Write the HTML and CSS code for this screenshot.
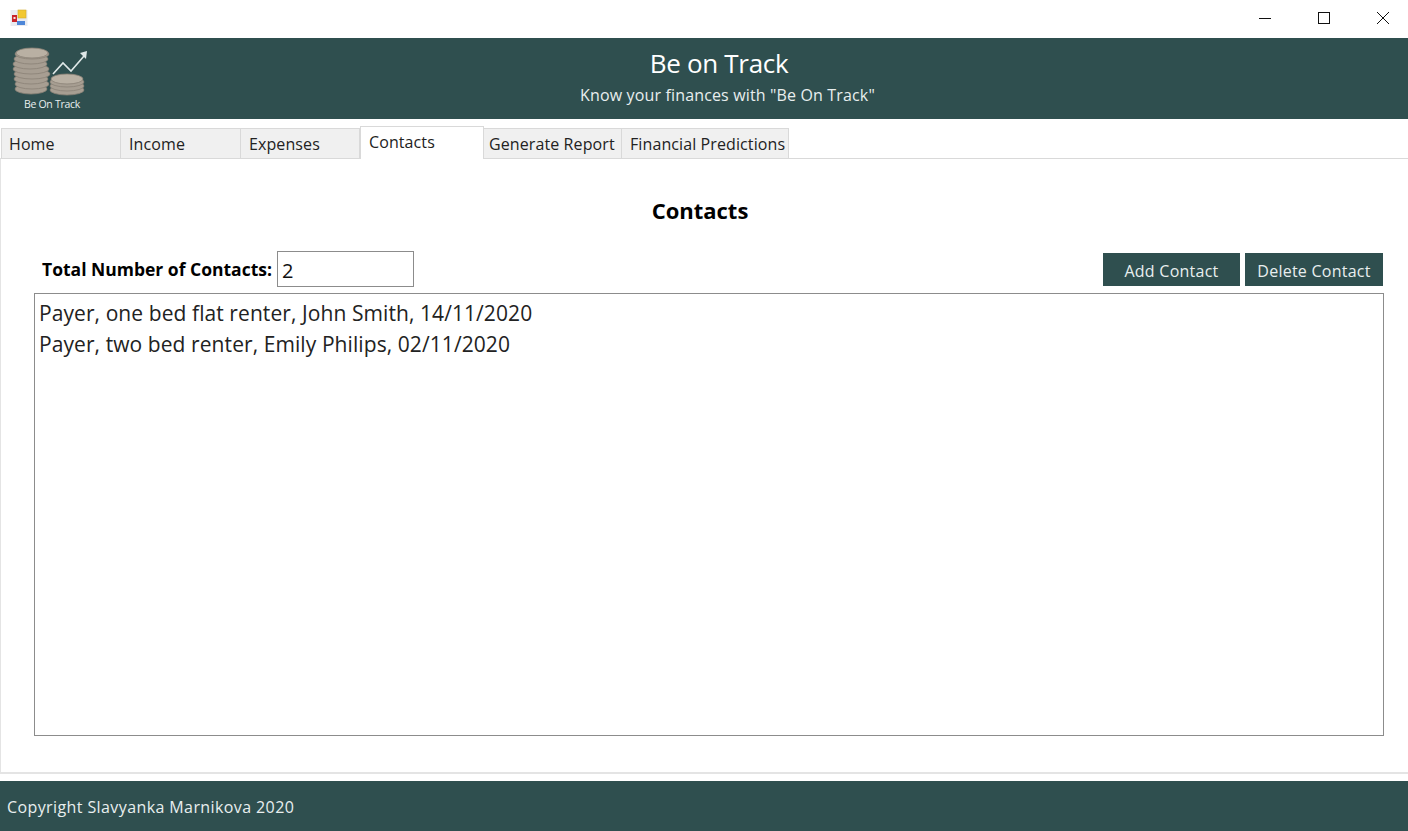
FILE: index.html
```html
<!DOCTYPE html>
<html lang="en">

<head>
    <meta charset="UTF-8">
    <meta name="viewport" content="width=device-width, initial-scale=1.0">
    <title>Be on Track</title>
    <link rel="stylesheet" href="styles.css">
</head>

<body>
    <div class="title_bar">
        <svg class="app_icon" width="18" height="18" viewBox="0 0 18 18">
            <rect x="0.5" y="1" width="17" height="16" fill="#e9ebf0"/>
            <rect x="2" y="6" width="5" height="7" fill="#c9242b"/>
            <rect x="3.5" y="8" width="2" height="2" fill="#f5e6e0"/>
            <rect x="8" y="1" width="8" height="8" fill="#f2c832" stroke="#d4ac2c" stroke-width="0.6"/>
            <rect x="7" y="12" width="8" height="4" fill="#4d86d8"/>
        </svg>
        <div class="win_btns">
            <svg width="14" height="14" viewBox="0 0 14 14"><path d="M1 7.5h12" stroke="#111" fill="none"/></svg>
            <svg width="14" height="14" viewBox="0 0 14 14"><rect x="1.5" y="1.5" width="11" height="11" stroke="#111" fill="none"/></svg>
            <svg width="14" height="14" viewBox="0 0 14 14"><path d="M1 1l12 12M13 1L1 13" stroke="#111" fill="none"/></svg>
        </div>
    </div>

    <div class="header">
        <div class="logo">
            <svg width="76" height="52" viewBox="0 0 76 52">
                <defs>
                    <filter id="soft"><feGaussianBlur stdDeviation="0.5"/></filter>
                </defs>
                <g filter="url(#soft)" fill="#a79e92" stroke="#8a8276" stroke-width="0.8">
                    <ellipse cx="19" cy="42" rx="16" ry="5"/>
                    <ellipse cx="20" cy="37" rx="17" ry="5"/>
                    <ellipse cx="19" cy="32" rx="17" ry="5"/>
                    <ellipse cx="20" cy="27" rx="18" ry="5"/>
                    <ellipse cx="19" cy="22" rx="18" ry="5"/>
                    <ellipse cx="18" cy="17" rx="17" ry="5"/>
                    <ellipse cx="19" cy="12" rx="17" ry="5"/>
                    <ellipse cx="20" cy="7" rx="17" ry="5"/>
                    <ellipse cx="20" cy="6" rx="16" ry="5" fill="#b9b0a3"/>
                    <ellipse cx="55" cy="43" rx="17" ry="5"/>
                    <ellipse cx="55" cy="39" rx="17" ry="5"/>
                    <ellipse cx="55" cy="35" rx="17" ry="5"/>
                    <ellipse cx="55" cy="32" rx="16" ry="5" fill="#b9b0a3"/>
                </g>
                <path d="M41 27l10-11 8 8 13-15" stroke="#dfe8e8" stroke-width="1.6" fill="none"/>
                <path d="M68 6l7-2-1 8z" fill="#dfe8e8"/>
            </svg>
            <div class="logo_text">Be On Track</div>
        </div>
        <div class="header_text">
            <div class="header_title">Be on Track</div>
            <div class="header_sub">Know your finances with "Be On Track"</div>
        </div>
    </div>

    <div class="tabs">
        <div class="tab tab_home">Home</div>
        <div class="tab tab_income">Income</div>
        <div class="tab tab_expenses">Expenses</div>
        <div class="tab tab_contacts active">Contacts</div>
        <div class="tab tab_report">Generate Report</div>
        <div class="tab tab_pred">Financial Predictions</div>
    </div>

    <div class="panel">
        <h1 class="panel_title">Contacts</h1>
        <div class="toolbar">
            <label class="total_label">Total Number of Contacts:</label>
            <div class="total_box">2</div>
            <div class="btns">
                <button class="btn btn_add">Add Contact</button>
                <button class="btn btn_del">Delete Contact</button>
            </div>
        </div>
        <div class="list_box">
            <div>Payer, one bed flat renter, John Smith, 14/11/2020</div>
            <div>Payer, two bed renter, Emily Philips, 02/11/2020</div>
        </div>
    </div>

    <div class="footer">Copyright Slavyanka Marnikova 2020</div>
</body>

</html>
```

FILE: styles.css
```css
* {
    margin: 0;
    padding: 0;
    box-sizing: border-box;
}

body {
    height: 831px;
    overflow: hidden;
    background-color: #fff;
    font-family: "Open Sans", "Noto Sans", sans-serif;
    color: #111;
}

.title_bar {
    display: flex;
    justify-content: space-between;
    align-items: center;
    height: 38px;
    padding: 0 18px 2px 10px;
}

.win_btns {
    display: flex;
    gap: 45px;
}

.header {
    display: flex;
    height: 81px;
    background-color: #2f4f4f;
    color: #fff;
}

.logo {
    width: 100px;
    flex: none;
    padding: 9px 0 0 12px;
    position: relative;
}

.logo svg {
    display: block;
}

.logo_text {
    position: absolute;
    left: 24px;
    top: 60px;
    font-size: 10.5px;
    line-height: 12px;
    letter-spacing: -0.3px;
    color: #e8eeee;
}

.header_text {
    flex: 1;
    text-align: center;
    padding: 8px 70px 0 0;
}

.header_title {
    font-size: 26px;
    line-height: 34px;
    letter-spacing: -0.3px;
}

.header_sub {
    padding: 5px 0 0 17px;
    font-size: 16px;
    line-height: 20px;
    letter-spacing: 0.15px;
    color: #e8eeee;
}

.tabs {
    display: flex;
    align-items: flex-end;
    height: 39px;
    padding-left: 1px;
}

.tab {
    height: 30px;
    padding-top: 3px;
    background-color: #f0f0f0;
    border: 1px solid #d9d9d9;
    border-bottom: 0;
    border-left: 0;
    font-size: 16px;
    line-height: 24px;
    letter-spacing: 0.1px;
    color: #222;
    white-space: nowrap;
}

.tab_home { width: 120px; padding-left: 7px; border-left: 1px solid #d9d9d9; }
.tab_income { width: 120px; padding-left: 8px; }
.tab_expenses { width: 119px; padding-left: 8px; }
.tab_contacts { width: 124px; padding-left: 8px; }
.tab_report { width: 138px; padding-left: 5px; }
.tab_pred { width: 167px; padding-left: 8px; }

.tab.active {
    height: 33px;
    padding-top: 3px;
    background-color: #fff;
    margin-bottom: -1px;
    position: relative;
    z-index: 1;
    border-left: 1px solid #d9d9d9;
}

.panel {
    height: 616px;
    padding: 36px 25px 0 33px;
    border: 1px solid #e4e4e4;
    border-top: 1px solid #d9d9d9;
    border-right: 0;
    border-bottom: 2px solid #e4e4e4;
}

.panel_title {
    padding-right: 17px;
    text-align: center;
    font-size: 22px;
    line-height: 30px;
    color: #000;
}

.toolbar {
    display: flex;
    align-items: flex-start;
    height: 42px;
    margin-top: 26px;
    padding-left: 8px;
}

.total_label {
    margin: 6px 5px 0 0;
    font-size: 17.5px;
    line-height: 24px;
    font-weight: 700;
    letter-spacing: 0;
    color: #000;
    white-space: nowrap;
}

.total_box {
    width: 137px;
    height: 36px;
    padding: 4px 0 0 4px;
    border: 1px solid #8c8c8c;
    font-size: 20px;
    line-height: 30px;
}

.btns {
    display: flex;
    gap: 5px;
    margin: 2px 0 0 auto;
}

.btn {
    height: 33px;
    padding-top: 2px;
    border: 0;
    background-color: #2f4f4f;
    color: #e8eeee;
    font-family: inherit;
    font-size: 16px;
    letter-spacing: 0.25px;
}

.btn_add { width: 137px; }
.btn_del { width: 138px; }

.list_box {
    width: 1350px;
    height: 443px;
    padding: 4px 4px;
    border: 1px solid #8c8c8c;
    font-size: 21px;
    line-height: 31px;
    letter-spacing: 0.08px;
    color: #222;
}

.footer {
    height: 50px;
    margin-top: 7px;
    padding: 14px 0 0 7px;
    background-color: #2f4f4f;
    color: #e8eeee;
    font-size: 16px;
    line-height: 24px;
    letter-spacing: 0.4px;
}
```
